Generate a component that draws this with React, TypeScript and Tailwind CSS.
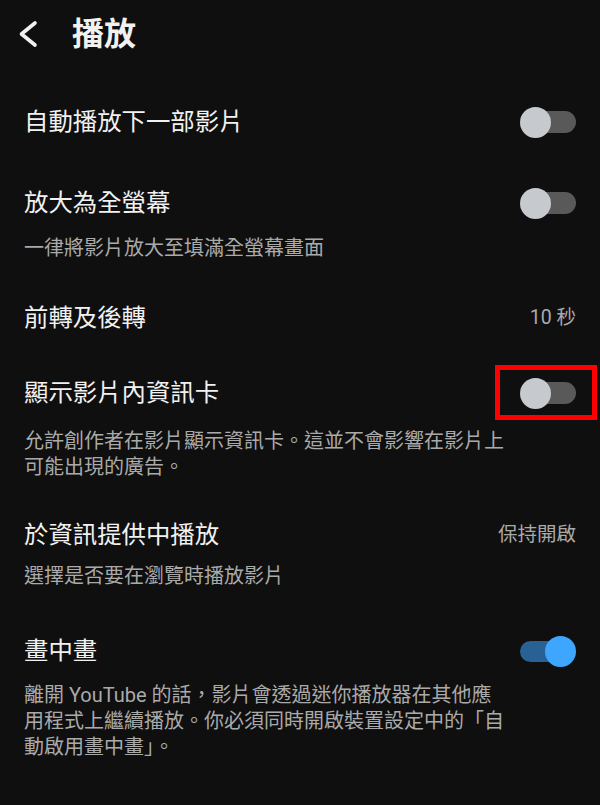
import React from "react";

const FONT = 'Roboto, "Noto Sans CJK TC", "Noto Sans", sans-serif';

function Toggle({ on, highlight }: { on?: boolean; highlight?: boolean }) {
  return (
    <div className="relative w-[56px] h-[31px] shrink-0">
      {on ? (
        <>
          <div className="absolute left-0 right-[2px] top-[5px] h-[21px] rounded-full bg-[#2a6194]" />
          <div className="absolute right-0 top-0 w-[31px] h-[31px] rounded-full bg-[#3ea6ff]" />
        </>
      ) : (
        <>
          <div className="absolute left-[2px] right-0 top-[4.5px] h-[22px] rounded-full bg-[#595959]" />
          <div className="absolute left-0 top-0 w-[31px] h-[31px] rounded-full bg-[#c6c9cd]" />
        </>
      )}
      {highlight && (
        <div className="absolute -left-[25px] -right-[21px] -top-[13px] -bottom-[11px] border-[5px] border-[#ff0000]" />
      )}
    </div>
  );
}

function Row({
  title,
  right,
  desc,
  pt,
  descMt,
}: {
  title: string;
  right: React.ReactNode;
  desc?: React.ReactNode;
  pt: string;
  descMt?: string;
}) {
  return (
    <div className={`pl-[24px] pr-[24px] ${pt}`}>
      <div className="flex items-center justify-between h-[40px]">
        <div className="text-[24.4px] leading-[40px] text-[#f1f1f1]">{title}</div>
        {right}
      </div>
      {desc && (
        <div className={`${descMt ?? ""} text-[20px] leading-[26px] text-[#aaaaaa]`}>{desc}</div>
      )}
    </div>
  );
}

function Value({ children }: { children: React.ReactNode }) {
  return <div className="text-[19.5px] leading-[40px] text-[#aaaaaa]">{children}</div>;
}

export default function App() {
  return (
    <div className="w-[600px] h-[805px] bg-[#0f0f0f] overflow-hidden" style={{ fontFamily: FONT }}>
      <div className="flex items-center h-[68px]">
        <div className="w-[72px] flex items-center pl-[18px]">
          <svg width="22" height="30" viewBox="0 0 22 30" fill="none">
            <polyline
              points="17,4 3.5,15 17,26"
              stroke="#f1f1f1"
              strokeWidth="3.6"
              strokeLinecap="round"
              strokeLinejoin="round"
            />
          </svg>
        </div>
        <div className="text-[32px] font-bold leading-[40px] text-[#f1f1f1]">播放</div>
      </div>

      <Row title="自動播放下一部影片" right={<Toggle />} pt="pt-[34px]" />
      <Row
        title="放大為全螢幕"
        right={<Toggle />}
        pt="pt-[41px]"
        desc="一律將影片放大至填滿全螢幕畫面"
        descMt="mt-[12px]"
      />
      <Row title="前轉及後轉" right={<Value>10 秒</Value>} pt="pt-[37px]" />
      <Row
        title="顯示影片內資訊卡"
        right={<Toggle highlight />}
        pt="pt-[35px]"
        desc={
          <>
            允許創作者在影片顯示資訊卡。這並不會影響在影片上
            <br />
            可能出現的廣告。
          </>
        }
        descMt="mt-[15px]"
      />
      <Row
        title="於資訊提供中播放"
        right={<Value>保持開啟</Value>}
        pt="pt-[35px]"
        desc="選擇是否要在瀏覽時播放影片"
        descMt="mt-[8px]"
      />
      <Row
        title="畫中畫"
        right={<Toggle on />}
        pt="pt-[42px]"
        desc={
          <>
            離開 YouTube 的話，影片會透過迷你播放器在其他應
            <br />
            用程式上繼續播放。你必須同時開啟裝置設定中的「自
            <br />
            動啟用畫中畫」。
          </>
        }
        descMt="mt-[11px]"
      />
    </div>
  );
}
